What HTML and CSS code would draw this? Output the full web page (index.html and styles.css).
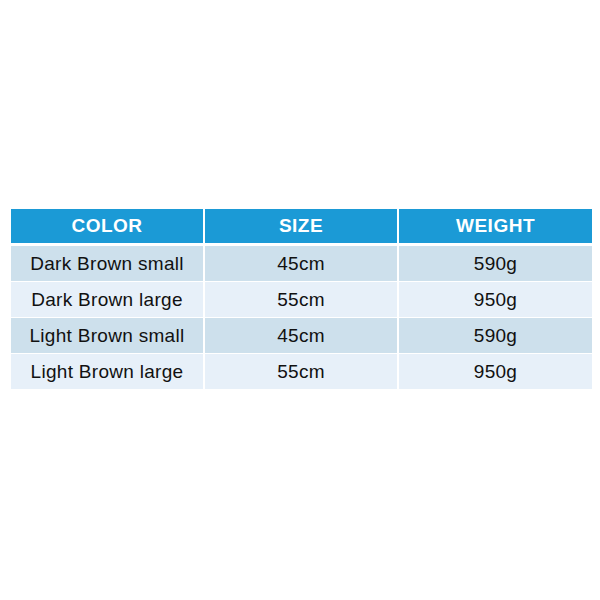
FILE: index.html
```html
<!DOCTYPE html>
<html>
<head>
<meta charset="utf-8">
<link rel="stylesheet" href="styles.css">
</head>
<body>
<div class="table">
  <div class="row head">
    <div class="cell">COLOR</div>
    <div class="cell">SIZE</div>
    <div class="cell">WEIGHT</div>
  </div>
  <div class="row odd">
    <div class="cell">Dark Brown small</div>
    <div class="cell">45cm</div>
    <div class="cell">590g</div>
  </div>
  <div class="row even">
    <div class="cell">Dark Brown large</div>
    <div class="cell">55cm</div>
    <div class="cell">950g</div>
  </div>
  <div class="row odd">
    <div class="cell">Light Brown small</div>
    <div class="cell">45cm</div>
    <div class="cell">590g</div>
  </div>
  <div class="row even">
    <div class="cell">Light Brown large</div>
    <div class="cell">55cm</div>
    <div class="cell">950g</div>
  </div>
</div>
</body>
</html>
```
FILE: styles.css
```css
html, body {
  margin: 0;
  padding: 0;
  background: #ffffff;
}
body {
  font-family: "Liberation Sans", Arial, sans-serif;
  color: #111111;
}
.table {
  width: 581px;
  margin: 209px 0 0 11px;
}
.row {
  display: grid;
  grid-template-columns: 192px 192px 193px;
  column-gap: 2px;
  height: 35px;
  margin-bottom: 1px;
}
.cell {
  display: flex;
  align-items: center;
  justify-content: center;
  font-size: 19px;
  letter-spacing: 0.3px;
}
.head {
  height: 34px;
  margin-bottom: 3px;
}
.head .cell {
  background: #1b9ad6;
  color: #ffffff;
  font-weight: bold;
  letter-spacing: 0.5px;
}
.odd .cell {
  background: #cde0ec;
}
.even .cell {
  background: #e7f0f9;
}
```
